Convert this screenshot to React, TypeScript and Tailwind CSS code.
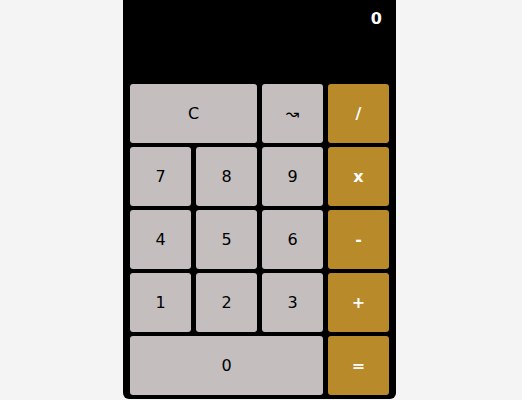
import React, { useState } from 'react';

type Key = {
  label: string;
  op?: boolean;
  span?: 2 | 3;
};

const keys: Key[] = [
  { label: 'C', span: 2 },
  { label: '↝' },
  { label: '/', op: true },
  { label: '7' },
  { label: '8' },
  { label: '9' },
  { label: 'x', op: true },
  { label: '4' },
  { label: '5' },
  { label: '6' },
  { label: '-', op: true },
  { label: '1' },
  { label: '2' },
  { label: '3' },
  { label: '+', op: true },
  { label: '0', span: 3 },
  { label: '=', op: true },
];

const App: React.FC = () => {
  const [display] = useState('0');

  return (
    <div className="flex min-h-screen justify-center bg-[#f4f4f4] pr-[3px] font-['DejaVu_Sans',sans-serif]">
      <div className="h-[399px] w-[273px] rounded-b-md bg-black">
        {/* display */}
        <div className="flex h-[84px] justify-end px-[14px] pt-[7px] text-[16px] font-semibold text-white">
          {display}
        </div>

        {/* keypad */}
        <div className="grid grid-cols-4 gap-x-[5px] gap-y-[4px] px-[7px]">
          {keys.map((k) => {
            let cls =
              'flex h-[59px] items-center justify-center rounded-[3px] text-[16px] ';
            if (k.op) cls += 'bg-[#b88a2a] font-semibold text-white';
            else cls += 'bg-[#c4bebe] text-black';
            if (k.span === 2) cls += ' col-span-2';
            if (k.span === 3) cls += ' col-span-3';
            return (
              <button key={k.label} className={cls}>
                {k.label}
              </button>
            );
          })}
        </div>
      </div>
    </div>
  );
};

export default App;
